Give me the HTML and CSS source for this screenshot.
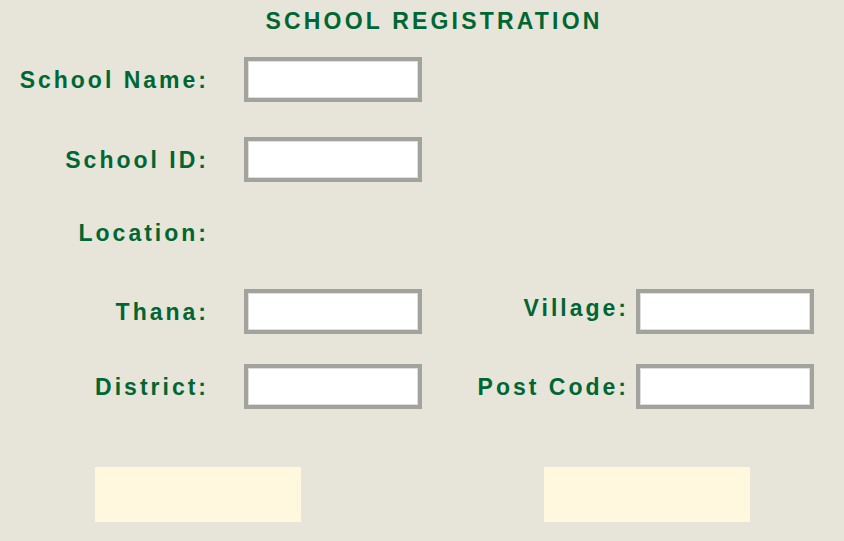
FILE: index.html
```html
<!DOCTYPE html>
<html>
<head>
<meta charset="utf-8">
<link rel="stylesheet" href="styles.css">
</head>
<body>
<div class="page">
  <h1 class="title">SCHOOL REGISTRATION</h1>
  <form class="form">
    <div class="row row-1">
      <label class="label">School Name:</label>
      <input class="field" type="text">
    </div>
    <div class="row row-2">
      <label class="label">School ID:</label>
      <input class="field" type="text">
    </div>
    <div class="row row-3">
      <label class="label">Location:</label>
    </div>
    <div class="row row-4">
      <label class="label">Thana:</label>
      <input class="field" type="text">
      <label class="label label-right label-up">Village:</label>
      <input class="field" type="text">
    </div>
    <div class="row row-5">
      <label class="label">District:</label>
      <input class="field" type="text">
      <label class="label label-right">Post Code:</label>
      <input class="field" type="text">
    </div>
    <div class="actions">
      <button class="btn" type="button"></button>
      <button class="btn" type="button"></button>
    </div>
  </form>
</div>
</body>
</html>
```

FILE: styles.css
```css
html, body {
  margin: 0;
  padding: 0;
  background: #e7e5d9;
}
.page {
  width: 844px;
  height: 541px;
  font-family: "Liberation Sans", Arial, sans-serif;
  color: #006633;
}
.title {
  margin: 0;
  padding-top: 8px;
  padding-left: 24px;
  height: 26px;
  line-height: 26px;
  font-size: 23px;
  font-weight: bold;
  letter-spacing: 3.2px;
  text-align: center;
}
.form {
  display: flex;
  flex-direction: column;
}
.row {
  display: grid;
  grid-template-columns: 244px 178px 214px 178px;
  height: 45px;
  align-items: center;
}
.row-1 { margin-top: 23px; }
.row-2 { margin-top: 35px; }
.row-3 { margin-top: 28px; }
.row-4 { margin-top: 34px; }
.row-5 { margin-top: 30px; }
.label {
  box-sizing: border-box;
  padding-right: 35px;
  font-size: 23px;
  font-weight: bold;
  letter-spacing: 3px;
  text-align: right;
  line-height: 26px;
}
.label-right { padding-right: 7px; }
.label-up { margin-top: -8px; }
.field {
  box-sizing: border-box;
  width: 178px;
  height: 45px;
  margin: 0;
  padding: 0;
  background: #ffffff;
  border: 4px solid #a3a39d;
  box-shadow: inset 0 0 0 1px #dedede;
  outline: none;
}
.actions {
  display: flex;
  margin-top: 58px;
  padding-left: 95px;
  gap: 243px;
}
.btn {
  width: 206px;
  height: 55px;
  margin: 0;
  padding: 0;
  border: none;
  background: #fff8df;
}
```
